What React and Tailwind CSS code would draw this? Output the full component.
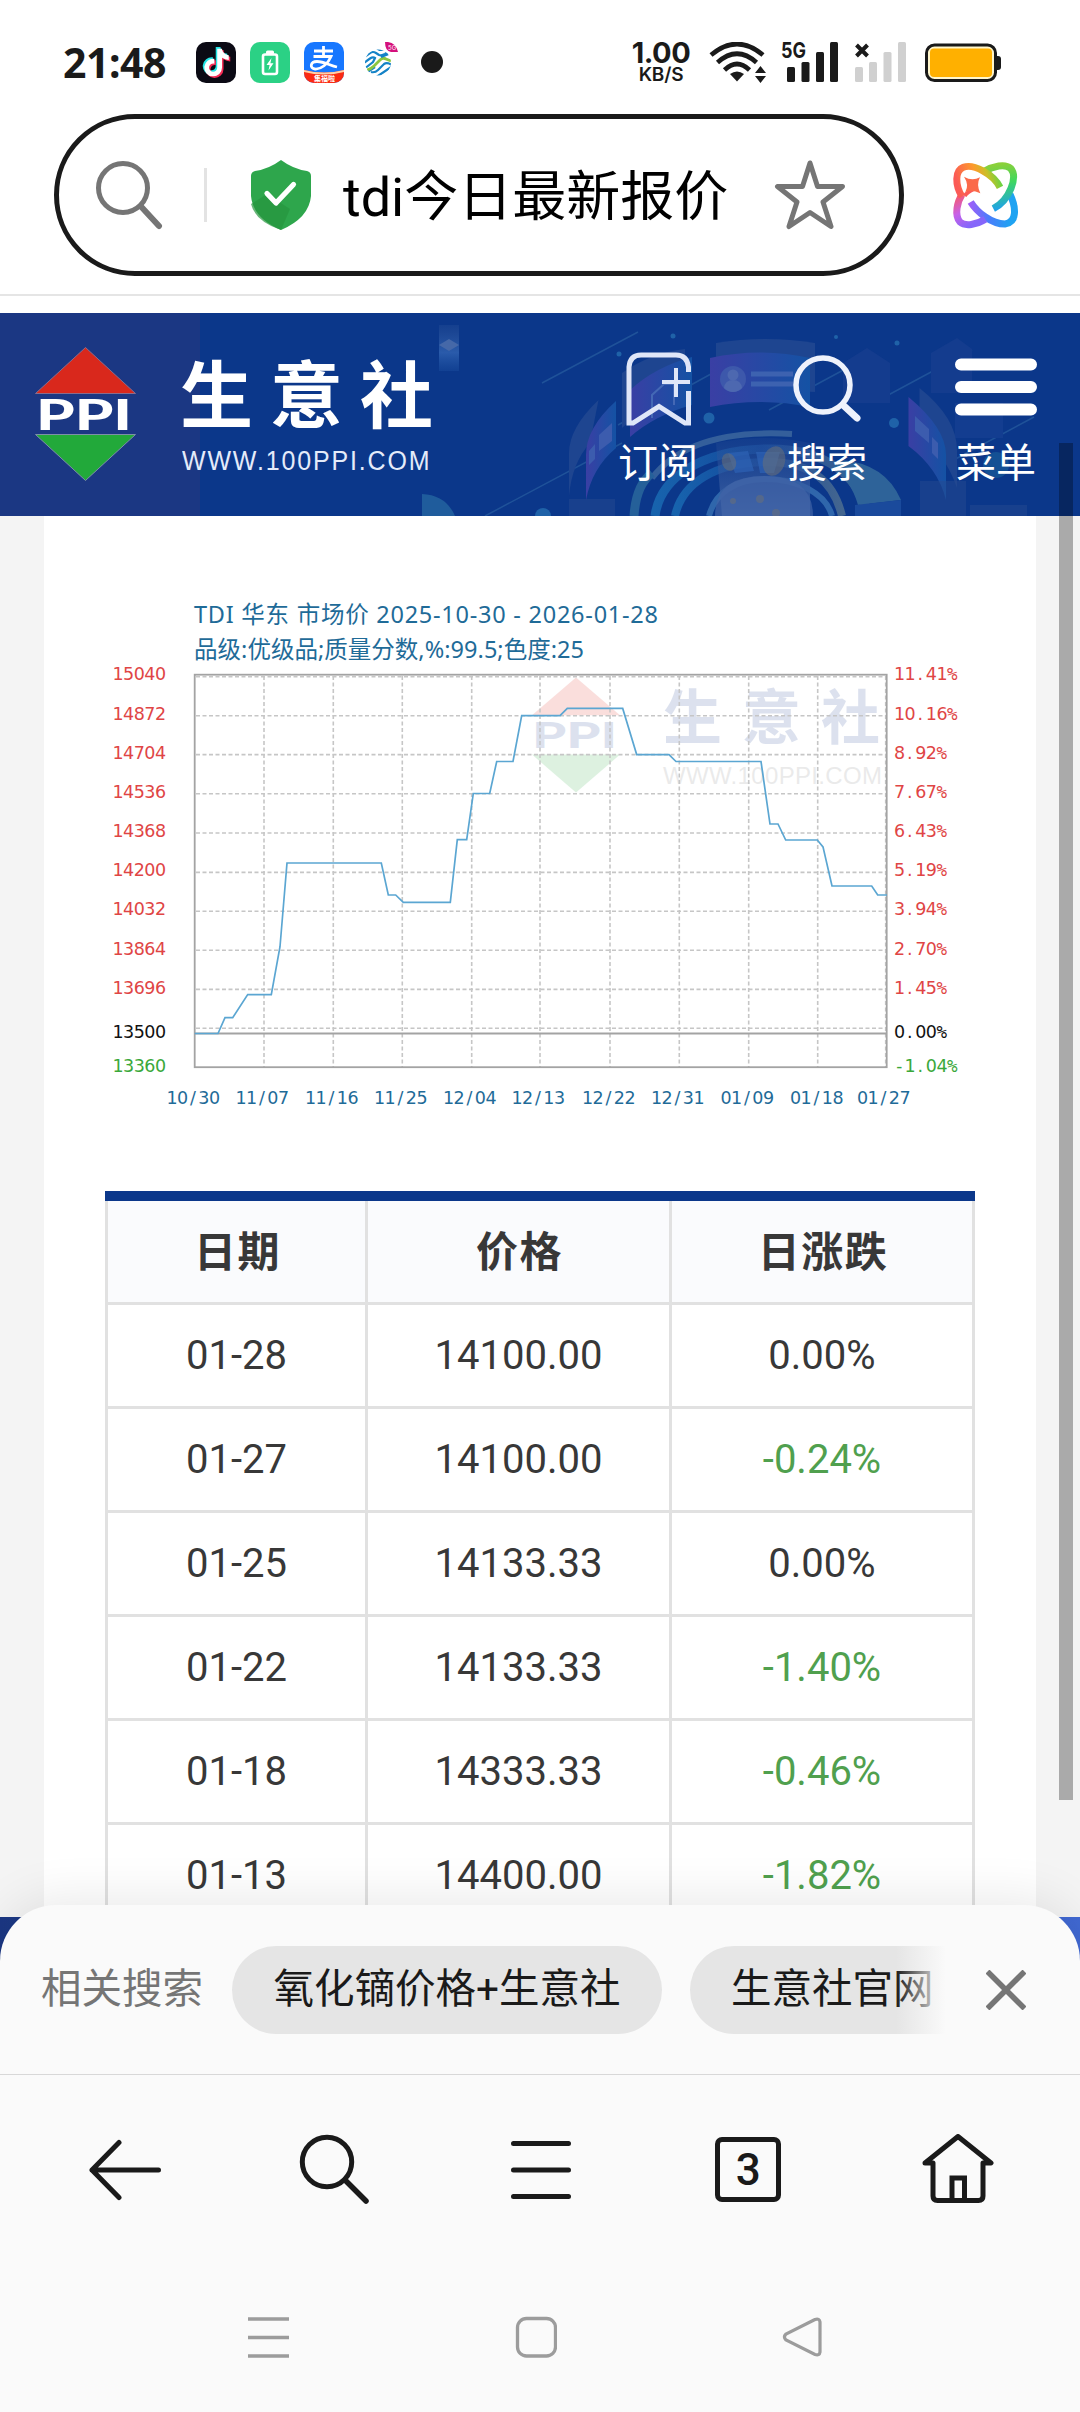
import React from 'react';
import { FaTiktok } from 'react-icons/fa';

const rows = [
  { date: '01-28', price: '14100.00', change: '0.00%' },
  { date: '01-27', price: '14100.00', change: '-0.24%' },
  { date: '01-25', price: '14133.33', change: '0.00%' },
  { date: '01-22', price: '14133.33', change: '-1.40%' },
  { date: '01-18', price: '14333.33', change: '-0.46%' },
  { date: '01-13', price: '14400.00', change: '-1.82%' },
];

// [price, percent, text baseline]
const yLabels = [
  ['15040', '11.41%', 100],
  ['14872', '10.16%', 139.5],
  ['14704', '8.92%', 178.5],
  ['14536', '7.67%', 217.5],
  ['14368', '6.43%', 256.5],
  ['14200', '5.19%', 296],
  ['14032', '3.94%', 335],
  ['13864', '2.70%', 374.5],
  ['13696', '1.45%', 413.5],
  ['13500', '0.00%', 457.5],
  ['13360', '-1.04%', 491.5],
];

const xLabels = [
  ['10/30', 76.5],
  ['11/07', 145.5],
  ['11/16', 215],
  ['11/25', 284],
  ['12/04', 353],
  ['12/13', 421.5],
  ['12/22', 492],
  ['12/31', 561],
  ['01/09', 630.5],
  ['01/18', 700],
  ['01/27', 767],
];

const gridX = [174, 243.3, 312.3, 381.7, 450, 520, 589.3, 658.7, 727.7, 795.7];
const gridY = [96.8, 135.7, 174.6, 213.8, 253, 292.4, 331.3, 370.2, 409.4, 448.3];

const pricePoints =
  '104.7,453.5 128,453.5 135,437.7 142.7,437.7 157.7,414.6 181.3,414.6 190,366.7 197,283 291.3,283 298.3,315 305.7,315 313.3,322.3 360.3,322.3 367.3,259.6 376.7,259.6 383.3,213.5 399.7,213.5 406.7,181.5 423,181.5 431.7,135.7 470,135.7 477.3,128.4 532.7,128.4 546.7,174.6 579,174.6 586,181.5 671,181.5 680,244 688,244 695.7,260 727.3,260 733,266.9 742,306 781.7,306 787.7,315 797,315';

function labelColor(i) {
  if (i === yLabels.length - 1) return '#3aa83a';
  if (i === yLabels.length - 2) return '#111111';
  return '#e04545';
}

// Every character sits in its own fixed cell, like a bitmap font
function CellText({ text, x, y, fill }) {
  return (
    <text y={y} fill={fill} fontSize="17.500" fontFamily="'DejaVu Sans'">
      {text.split('').map((ch, i) => (
        <tspan
          key={i}
          x={x + i * 10.6 + (ch === '.' || ch === '/' ? 2.4 : 0)}
          fontFamily={ch === '%' || ch === '-' ? "'DejaVu Sans Mono'" : undefined}
        >
          {ch}
        </tspan>
      ))}
    </text>
  );
}

function StatusBar() {
  return (
    <div className="flex h-[114px] shrink-0 items-start pt-[42px] pl-[63px] text-[#1a1a1a]">
      <div className="w-[133px] font-['Noto_Sans',sans-serif] text-[41px] leading-[41px] font-bold tracking-[-0.5px]">21:48</div>

      <div className="flex gap-[14px]">
        <div className="flex h-[41px] w-[40px] items-center justify-center rounded-[10px] bg-[#0b0a14]">
          <svg width="32" height="34" viewBox="0 0 32 34">
            <FaTiktok x="1" y="1" size="28" color="#25e5e6" />
            <FaTiktok x="4" y="4" size="28" color="#f52b55" />
            <FaTiktok x="2.5" y="2.5" size="28" color="#ffffff" />
          </svg>
        </div>
        <div className="flex h-[41px] w-[40px] items-center justify-center rounded-[10px] bg-[#2bd185]">
          <svg width="18" height="26" viewBox="0 0 18 26" fill="none">
            <rect x="2" y="4.500" width="14" height="19.500" rx="2" stroke="white" strokeWidth="2.600" />
            <rect x="5" y="0.500" width="8" height="4" rx="1.500" fill="white" />
            <path d="M10.500 8 5.500 15H8.600L7.500 20.500 12.500 13.300H9.400Z" fill="white" />
          </svg>
        </div>
        <svg width="40" height="41" viewBox="0 0 40 41">
          <defs>
            <clipPath id="pay">
              <rect width="40" height="41" rx="10" />
            </clipPath>
          </defs>
          <g clipPath="url(#pay)">
            <rect width="40" height="41" fill="#1777ff" />
            <g fill="none" stroke="white">
              <path d="M10 9H29M19.500 4V14.500M9.500 14.500H27C24 22 17 27.500 11 27C5.500 26.500 6 19.500 13 19.500C20 19.500 26 23.500 33 25" strokeWidth="2.800" />
            </g>
            <path d="M0 28Q20 33 40 28V41H0Z" fill="#fb2a12" />
            <path d="M0 28Q20 33 40 28V30Q20 35 0 30Z" fill="#ffd0a8" />
            <text x="10" y="39" fontSize="7" fill="#fff" fontWeight="700" fontFamily="'Noto Sans CJK SC'">集福啦</text>
          </g>
        </svg>
        <svg width="49" height="41" viewBox="0 0 49 41" fill="none">
          <defs>
            <clipPath id="cm">
              <circle cx="20" cy="20.500" r="13" />
            </clipPath>
          </defs>
          <g clipPath="url(#cm)" strokeWidth="2.200">
            <path d="M5 16L12 11Q15 9 18 11L21 13Q24 14 27 12L34 7M5 21.500L12 16.500Q15 14.500 17 16L15 20L8 25.500" stroke="#1583c7" />
            <path d="M12 7Q16 4 20 7Q23 9 27 7M17 25L8 31M12 34Q16 37 20 34L36 23" stroke="#1583c7" />
            <path d="M9 28Q13 27 16 24L22 18Q25 15 28 17L33 19" stroke="#8cc63f" strokeWidth="2.800" />
            <path d="M13 30Q17 31 20 28L26 22Q29 20 34 23M23 15L33 11" stroke="#1583c7" />
          </g>
          <path d="M27 0H30Q38 1 40 10H33Q27 9 27 0Z" fill="#d4107c" />
          <text x="30" y="8" fontSize="6" fill="#fff" fontFamily="Inter">5G</text>
        </svg>
        <div className="mt-[9px] h-[22px] w-[22px] rounded-full bg-[#1a1a1a]" />
      </div>

      <div className="ml-[188px] flex w-[60px] flex-col items-center font-['Inter',sans-serif] font-bold">
        <div className="text-[29px] leading-[22px] tracking-[-0.500px]">1.00</div>
        <div className="mt-[2px] text-[19px] leading-[18px] font-semibold tracking-[-0.200px]">KB/S</div>
      </div>

      <svg className="ml-[18px]" width="60" height="42" viewBox="0 0 60 42" fill="none" stroke="#1a1a1a" strokeWidth="4.600">
        <path d="M2 13Q28 -9 54 13M8.500 20.500Q28 3 47.500 20.500M15.500 28Q28 16 40.500 28" />
        <path d="M21 32Q28 27 35 32L28 39.500Z" fill="#1a1a1a" stroke="none" />
        <path d="M46 31 51.500 24 57 31ZM46 34 51.500 41 57 34Z" fill="#1a1a1a" stroke="none" />
      </svg>

      <svg className="ml-[12px] overflow-visible" width="58" height="42" viewBox="0 0 58 42" fill="#1a1a1a">
        <text x="0" y="16" fontSize="22" fontWeight="700" fontFamily="Inter" textLength="25" lengthAdjust="spacingAndGlyphs">5G</text>
        <rect x="6" y="25" width="8" height="15" rx="1.500" />
        <rect x="20.500" y="20" width="8" height="20" rx="1.500" />
        <rect x="35" y="10" width="8" height="30" rx="1.500" />
        <rect x="49" y="0" width="8" height="40" rx="1.500" />
      </svg>

      <svg className="ml-[16px]" width="52" height="42" viewBox="0 0 52 42" fill="#d0d0d0">
        <path d="M1.500 3 12.500 14M12.500 3 1.500 14" stroke="#1a1a1a" strokeWidth="4" />
        <rect x="0" y="25" width="8" height="15" rx="1.500" />
        <rect x="14" y="20" width="8" height="20" rx="1.500" />
        <rect x="28.500" y="10" width="8" height="30" rx="1.500" />
        <rect x="43" y="0" width="8" height="40" rx="1.500" />
      </svg>

      <svg className="ml-[18px] mt-px" width="78" height="40" viewBox="0 0 78 40">
        <rect x="1.500" y="2" width="69" height="35.500" rx="8" fill="#fff6cc" stroke="#1a1a1a" strokeWidth="3" />
        <rect x="5" y="5.500" width="62" height="28.500" rx="4" fill="#ffb000" />
        <path d="M72 13H73Q76 13 76 16V24Q76 27 73 27H72Z" fill="#1a1a1a" />
      </svg>
    </div>
  );
}

function AddressBar() {
  return (
    <div className="flex h-[182px] shrink-0 items-start border-b-2 border-[#e5e5e5] pl-[54px]">
      <div className="flex h-[162px] w-[850px] items-center rounded-full border-[5px] border-[#1a1a1a] pl-[36px]">
        <svg width="68" height="72" viewBox="0 0 68 72" fill="none" stroke="#757575" strokeWidth="5" strokeLinecap="round">
          <circle cx="28" cy="29" r="24.500" />
          <path d="M46 47.500 64 67" strokeWidth="6" />
        </svg>
        <div className="ml-[41px] h-[54px] w-[3px] bg-[#e3e3e3]" />
        <svg className="ml-[43px]" width="62" height="72" viewBox="0 0 62 72">
          <path d="M31 1Q43 10 57 12Q61 13 61 17V37Q59 59 31 71Q3 59 1 37V17Q1 13 5 12Q19 10 31 1Z" fill="#2ea64c" />
          <path d="M17 35 1 45Q5 62 31 71L40 50Z" fill="#27953f" opacity="0.700" />
          <path d="M17 34.500 26 44 43.500 25.500" fill="none" stroke="#fff" strokeWidth="5.200" strokeLinecap="round" strokeLinejoin="round" />
        </svg>
        <div className="mt-[6px] ml-[31px] w-[431px] font-['Roboto','Noto_Sans_CJK_SC',sans-serif] text-[54px] leading-[60px] whitespace-nowrap text-black">
          tdi今日最新报价
        </div>
        <svg width="72" height="70" viewBox="0 0 72 70" fill="none" stroke="#757575" strokeWidth="5" strokeLinejoin="round">
          <path d="M36 3 43.500 26.500H68.500L49 42 57 66.500 36 52.500 15 66.500 23 42 3.500 26.500H28.500Z" />
        </svg>
      </div>

      <svg className="ml-[36px] mt-[36px]" width="90" height="90" viewBox="0 0 270 270" fill="none" strokeWidth="21" strokeLinecap="butt">
        <defs>
          <linearGradient id="a1" gradientUnits="userSpaceOnUse" x1="60" y1="130" x2="190" y2="90">
            <stop offset="0" stopColor="#fb5a56" />
            <stop offset="0.450" stopColor="#fd9a2c" />
            <stop offset="0.700" stopColor="#c9c026" />
            <stop offset="1" stopColor="#52d84a" />
          </linearGradient>
          <linearGradient id="a2" gradientUnits="userSpaceOnUse" x1="85" y1="160" x2="215" y2="170">
            <stop offset="0" stopColor="#a45cf8" />
            <stop offset="0.500" stopColor="#4a7dfb" />
            <stop offset="1" stopColor="#1fa3f2" />
          </linearGradient>
          <linearGradient id="b1" gradientUnits="userSpaceOnUse" x1="160" y1="45" x2="180" y2="185">
            <stop offset="0" stopColor="#8bd03a" />
            <stop offset="0.400" stopColor="#3fd75f" />
            <stop offset="1" stopColor="#1c9df5" />
          </linearGradient>
          <linearGradient id="b2" gradientUnits="userSpaceOnUse" x1="60" y1="130" x2="110" y2="215">
            <stop offset="0" stopColor="#f7586a" />
            <stop offset="0.500" stopColor="#c861e8" />
            <stop offset="1" stopColor="#8566fa" />
          </linearGradient>
        </defs>
        <path d="M92 156C112 188 155 222 195 222C230 218 230 175 210 133" stroke="url(#a2)" />
        <path d="M136 208C110 224 75 230 60 216C42 195 52 155 66 134" stroke="url(#b2)" />
        <path d="M133 64C160 48 195 40 212 55C234 80 210 150 160 176" stroke="url(#b1)" />
        <path d="M180 112C160 72 100 40 70 52C44 62 45 105 66 140" stroke="url(#a1)" />
        <path d="M74 138Q80 128 100 118" stroke="#fb5a56" strokeWidth="12" />
        <path d="M72 80Q96 94 120 82Q108 104 121 130Q96 117 76 126Q88 104 72 80Z" fill="#fb6a4a" />
      </svg>
    </div>
  );
}

function BannerArt() {
  return (
    <svg className="absolute inset-0" width="1080" height="203" viewBox="0 0 1080 203" fill="none">
      <defs>
        <linearGradient id="screen" x1="0" x2="1">
          <stop offset="0" stopColor="#3a3fa4" />
          <stop offset="1" stopColor="#1452a4" />
        </linearGradient>
        <linearGradient id="ring" x1="0" x2="1">
          <stop offset="0" stopColor="#1763ad" />
          <stop offset="0.500" stopColor="#14489b" />
          <stop offset="1" stopColor="#44668f" />
        </linearGradient>
        <linearGradient id="cube" x1="0" y1="0" x2="0" y2="1">
          <stop offset="0" stopColor="#2c5399" stopOpacity="0.300" />
          <stop offset="0.600" stopColor="#2a5bab" />
          <stop offset="1" stopColor="#1c4fa0" stopOpacity="0.400" />
        </linearGradient>
        <linearGradient id="beam" x1="0" y1="0" x2="0" y2="1">
          <stop offset="0" stopColor="#2f5298" stopOpacity="0.200" />
          <stop offset="1" stopColor="#3d62a5" />
        </linearGradient>
      </defs>

      <rect x="439" y="12" width="20" height="46" fill="url(#cube)" />
      <path d="M439 32 449 26 459 32 449 38Z" fill="#4568a8" />
      <path d="M422 203V181Q446 182 455 203Z" fill="#1f5c9c" />

      <g stroke="#1f5299" strokeWidth="1.500">
        <path d="M485 203 622 130M542 70 638 19M769 97 862 47M879 87 972 37M948 150 1034 104M618 112 720 56" />
      </g>

      <path d="M843 50 867 35 890 50V90H843ZM931 40 957 25 972 36V80H931Z" fill="#143c8e" />
      <path d="M955 90H1003V125H955Z" fill="#133d90" />

      <path d="M716 30Q766 22 815 30V79L716 74Z" fill="#1e4590" />
      <path d="M710 45Q760 34 810 45V94Q760 84 710 94Z" fill="url(#screen)" />
      <circle cx="733" cy="66" r="13" fill="#3d58ab" />
      <circle cx="733" cy="62" r="5.500" fill="#4d68b0" />
      <path d="M724 75Q725 67 733 67T742 75Q738 79 733 79T724 75Z" fill="#4d68b0" />
      <path d="M751 61H793M751 71H793" stroke="#3d62b0" strokeWidth="5" />

      <path d="M622 60Q650 40 685 36V82Q650 88 622 115Z" fill="#1e4590" />
      <path d="M630 77Q655 54 692 44V92Q655 102 630 124Z" fill="url(#screen)" />
      <path d="M652 105V82L664 71H674V92" stroke="#4468b5" strokeWidth="2" />
      <path d="M598.500 87Q569 115 569 140V183Q572 150 590 130Z" fill="#1e4590" />
      <path d="M616 88Q586 115 586 142V187Q592 155 616 135Z" fill="url(#screen)" />
      <path d="M599 122 612 110V128L599 138ZM589 138 595 131V146L589 152Z" fill="#3c5cae" />
      <path d="M919.500 75Q957 105 957 137V175Q945 140 919.500 125Z" fill="#1e4590" />
      <path d="M908.500 84Q946 115 946 142V187Q938 155 908.500 133Z" fill="url(#screen)" />
      <path d="M915 103 929 116V130L915 118ZM932 124 938 130V146L932 140Z" fill="#3c5cae" />

      <path d="M792 121Q690 115 652 165" stroke="#345f9b" strokeWidth="6" />
      <path d="M634 203Q636 172 652 160" stroke="#256099" strokeWidth="9" />
      <path d="M655 203C660 165 700 138 764 136S860 165 868 203" stroke="url(#ring)" strokeWidth="9" />
      <path d="M675 203C682 170 715 150 764 149S834 170 842 203" stroke="url(#ring)" strokeWidth="8" />
      <path d="M709 203C715 180 735 166 766 166S826 180 832 203" stroke="#2f66ab" strokeWidth="6" />
      <path d="M840 147Q885 150 901 187L858 192Q850 165 832 155Z" fill="#2e6399" />
      <path d="M855 192 901 187V203H855Z" fill="#1a4a9c" />
      <path d="M716 130Q764 120 810 130V203H722Z" fill="url(#beam)" />
      <path d="M715 203Q715 163 764 163T813 203Z" fill="#4164a6" opacity="0.700" />
      <path d="M728 140 748 138 754 158 735 160ZM756 139H780L774 160H760Z" fill="#2e62b5" opacity="0.700" />
      <g fill="#6a7078" opacity="0.550">
        <ellipse cx="774" cy="148" rx="11" ry="15" transform="rotate(15 774 148)" />
        <ellipse cx="729" cy="149" rx="7" ry="9" transform="rotate(-20 729 149)" />
        <circle cx="760" cy="186" r="4" />
        <circle cx="776" cy="200" r="4" />
        <circle cx="733" cy="188" r="3" />
      </g>

      <path d="M569 186H615V203H569ZM920 168H966V203H920ZM970 192H1027V203H970Z" fill="#26498f" opacity="0.500" />
      <g fill="#1f62a8">
        <circle cx="709" cy="105" r="5.500" />
        <circle cx="894" cy="110" r="5" />
        <circle cx="673" cy="23" r="2.500" />
        <circle cx="619" cy="41" r="2.500" />
        <circle cx="897" cy="30" r="2.500" />
        <circle cx="836" cy="24" r="2" />
        <circle cx="996" cy="152" r="13" fill="#145094" />
        <circle cx="543" cy="203" r="8" />
      </g>
    </svg>
  );
}

function Banner() {
  return (
    <div className="relative h-[203px] shrink-0 overflow-hidden bg-[#0b378a]">
      <div className="absolute inset-y-0 left-0 w-[200px] bg-[#1b3783]" />
      <BannerArt />
      <div className="relative flex h-full items-start pl-[34px] text-white">
        <svg className="mt-[33px]" width="103" height="136" viewBox="0 0 103 136">
          <path d="M51.500 1.500 101.500 47.500H1.500Z" fill="#d9281c" stroke="#8a6c8c" strokeWidth="1" />
          <text x="2" y="84" fontSize="42" fontWeight="900" fill="white" fontFamily="Lato" textLength="96" lengthAdjust="spacingAndGlyphs">PPI</text>
          <path d="M51.500 134.500 101.500 88.500H1.500Z" fill="#22a93a" stroke="#7d8fa8" strokeWidth="1" />
        </svg>
        <div className="ml-[43px] w-[435px] whitespace-nowrap">
          <div className="mt-[33px] font-['Noto_Sans_CJK_SC',sans-serif] text-[73px] leading-[88px] font-bold tracking-[17px]">生意社</div>
          <div className="mt-[10px] ml-[2px] origin-left scale-x-[0.925] font-['Liberation_Sans',sans-serif] text-[27px] leading-[34px] tracking-[2px] text-[#e4ebfa]">WWW.100PPI.COM</div>
        </div>

        <div className="flex gap-[83px] pt-[38px] font-['Roboto','Noto_Sans_CJK_SC',sans-serif] text-[40px] leading-[50px] whitespace-nowrap">
          <div className="flex w-[86px] flex-col items-center">
            <svg width="68" height="78" viewBox="0 0 68 78" fill="none" stroke="#dfe6f8" strokeWidth="5">
              <path d="M64.500 21V16Q63 4 52 4H17Q6 4 5 16V72H9L35 55.500 61 72H64.500V40" />
              <path d="M52 17V46M38 31H66" strokeWidth="4" />
            </svg>
            <div className="mt-[10px]">订阅</div>
          </div>
          <div className="flex w-[86px] flex-col items-center">
            <svg width="70" height="78" viewBox="0 0 70 78" fill="none" stroke="#eef2fc" strokeWidth="5.500" strokeLinecap="round">
              <circle cx="31" cy="34" r="27" />
              <path d="M51 54 65 67" strokeWidth="7" />
            </svg>
            <div className="mt-[10px]">搜索</div>
          </div>
          <div className="flex w-[86px] flex-col items-center">
            <svg width="82" height="78" viewBox="0 0 82 78" stroke="white" strokeWidth="12" strokeLinecap="round">
              <path d="M6 13.500H76M6 36H76M6 58.500H76" />
            </svg>
            <div className="mt-[10px]">菜单</div>
          </div>
        </div>
      </div>
    </div>
  );
}

function PriceChart() {
  return (
    <svg className="mt-[64px] ml-[46px] block shrink-0" width="900" height="540" viewBox="0 0 900 540" fill="none">
      <g opacity="0.150">
        <path d="M486 97.500 530 135.300H442Z" fill="#e02a1e" />
        <path d="M486 212.500 530 174.600H442Z" fill="#22a93a" />
        <g fill="#1b3f93">
          <text x="442" y="168" fontSize="36" fontWeight="900" fontFamily="Lato" textLength="85" lengthAdjust="spacingAndGlyphs">PPI</text>
          <text x="573 652 731" y="159" fontSize="59" fontWeight="700" fontFamily="'Noto Sans CJK SC'">生意社</text>
        </g>
        <text x="573" y="204" fontSize="24" fill="#777" fontFamily="'Liberation Sans'" textLength="219">WWW.100PPI.COM</text>
      </g>

      <g fill="#1f6b98" fontSize="23.500" fontFamily="'Noto Sans', 'Noto Sans CJK SC'">
        <text x="104" y="42.500" textLength="464">TDI 华东 市场价 2025-10-30 - 2026-01-28</text>
        <text x="104" y="78" textLength="390">品级:优级品;质量分数,%:99.5;色度:25</text>
      </g>

      <g stroke="#c6c6c6" strokeWidth="1.600" strokeDasharray="4 2.500">
        {gridX.map((x) => (
          <path key={x} d={`M${x} 96V487`} />
        ))}
        {gridY.map((y) => (
          <path key={y} d={`M106 ${y}H796`} />
        ))}
      </g>
      <rect x="104.700" y="94.700" width="692" height="392.500" stroke="#a3a3a3" strokeWidth="1.800" />
      <path d="M105 453.500H797" stroke="#a3a3a3" strokeWidth="1.800" />
      <polyline points={pricePoints} stroke="#5ba6d2" strokeWidth="1.700" />

      {yLabels.map(([price, pct, y], i) => (
        <g key={price}>
          <CellText text={price} x={22.5} y={y} fill={labelColor(i)} />
          <CellText text={pct} x={804} y={y} fill={labelColor(i)} />
        </g>
      ))}
      {xLabels.map(([label, x]) => (
        <CellText key={label} text={label} x={x} y={523.5} fill="#1f6b98" />
      ))}
    </svg>
  );
}

function PriceTable() {
  return (
    <div className="mx-[61px] mt-[71px] border-t-[10px] border-[#0b378a] font-['Roboto','Noto_Sans_CJK_SC',sans-serif] text-[#383838]">
      <div className="grid h-[104px] grid-cols-[263px_304px_303px] border-b-[3px] border-[#e1e1e1] bg-[#fafbfd] text-center text-[42px] leading-[103px] font-bold tracking-[1.500px]">
        <div className="border-x-[3px] border-[#e1e1e1] pl-[2px]">日期</div>
        <div className="border-r-[3px] border-[#e1e1e1] pl-[2px]">价格</div>
        <div className="border-r-[3px] border-[#e1e1e1] pl-[2px]">日涨跌</div>
      </div>
      {rows.map((row) => (
        <div key={row.date} className="grid h-[104px] grid-cols-[263px_304px_303px] border-b-[3px] border-[#e1e1e1] text-center text-[40px] leading-[102px]">
          <div className="border-x-[3px] border-[#e1e1e1]">{row.date}</div>
          <div className="border-r-[3px] border-[#e1e1e1]">{row.price}</div>
          <div className={row.change.startsWith('-') ? 'border-r-[3px] border-[#e1e1e1] text-[#50a04e]' : 'border-r-[3px] border-[#e1e1e1]'}>
            {row.change}
          </div>
        </div>
      ))}
    </div>
  );
}

function RelatedSearches() {
  return (
    <div className="relative z-10 -mt-[80px] flex h-[169px] shrink-0 items-center rounded-t-[56px] bg-[#fafafa] pl-[41px] font-['Roboto','Noto_Sans_CJK_SC',sans-serif] text-[40.500px] whitespace-nowrap text-[#1a1a1a] shadow-[0_-6px_50px_rgba(0,0,0,0.09)]">
      <div className="w-[191px] text-[#757575]">相关搜索</div>
      <div className="flex w-[714px] gap-[28px] overflow-hidden">
        <div className="flex h-[88px] w-[430px] shrink-0 items-center justify-center rounded-full bg-[#e5e5e5]">氧化镝价格+生意社</div>
        <div className="relative flex h-[88px] w-[256px] shrink-0 items-center rounded-l-full bg-[#e5e5e5] pl-[41px]">
          生意社官网
          <div className="absolute inset-y-0 right-0 w-[50px] bg-linear-to-r from-[#fafafa]/0 to-[#fafafa]" />
        </div>
      </div>
      <svg className="ml-[40px]" width="40" height="40" viewBox="0 0 40 40" stroke="#757575" strokeWidth="5.500">
        <path d="M1.500 1.500 38.500 38.500M38.500 1.500 1.500 38.500" />
      </svg>
    </div>
  );
}

function Toolbar() {
  return (
    <div className="relative z-10 flex h-[190px] shrink-0 items-center justify-between border-t border-[#d8d8d8] bg-[#fafafa] pl-[89px] pr-[86px] text-[#1a1a1a]">
      <svg width="72" height="72" viewBox="0 0 72 72" fill="none" stroke="currentColor" strokeWidth="5" strokeLinecap="round" strokeLinejoin="round">
        <path d="M69.500 36H3M30 8.500 3 36 30 63.500" />
      </svg>
      <svg width="72" height="72" viewBox="0 0 72 72" fill="none" stroke="currentColor" strokeWidth="5" strokeLinecap="round">
        <circle cx="30" cy="28" r="24.700" />
        <path d="M49 47 69 67" strokeWidth="5.500" />
      </svg>
      <svg width="72" height="72" viewBox="0 0 72 72" fill="none" stroke="currentColor" strokeWidth="5" strokeLinecap="round">
        <path d="M7.500 9.500H62.500M7.500 36H62.500M7.500 62.500H62.500" />
      </svg>
      <div className="flex h-[72px] w-[72px] items-center pl-[1.500px]">
        <div className="flex h-[65px] w-[66px] items-center justify-center rounded-[7px] border-[5px] border-current font-['Roboto',sans-serif] text-[44px] font-medium">3</div>
      </div>
      <svg width="72" height="72" viewBox="0 0 72 72" fill="none" stroke="currentColor" strokeWidth="5" strokeLinejoin="round">
        <path d="M36 2.500 69 29H61V62Q61 66.500 56.500 66.500H15.500Q11 66.500 11 62V29H3Z" />
        <path d="M30 66V44H42.500V66" strokeLinejoin="miter" />
      </svg>
    </div>
  );
}

function SystemNav() {
  return (
    <div className="relative z-10 flex flex-1 items-start justify-between bg-[#fafafa] pt-[52px] pl-[247px] pr-[256px]">
      <svg width="42" height="42" viewBox="0 0 42 42" stroke="#9c9c9c" strokeWidth="3.500">
        <path d="M1 3H42M1 21.500H42M1 40H42" />
      </svg>
      <svg width="42" height="42" viewBox="0 0 42 42" fill="none" stroke="#9c9c9c" strokeWidth="3.300">
        <rect x="2.500" y="2.500" width="38" height="37.500" rx="9" />
      </svg>
      <svg width="42" height="42" viewBox="0 0 42 42" fill="none" stroke="#9c9c9c" strokeWidth="3.200">
        <path d="M33 3.500 4 18Q1 21 4 24L33 38.500Q37.500 40 38 36V6Q37.500 2 33 3.500Z" />
      </svg>
    </div>
  );
}

export default function App() {
  return (
    <div className="flex h-[2412px] w-[1080px] flex-col overflow-hidden bg-white">
      <StatusBar />
      <AddressBar />
      <div className="relative mt-[17px] flex h-[1672px] shrink-0 flex-col overflow-hidden bg-[#f4f4f4]">
        <Banner />
        <div className="mx-[44px] flex h-[1401px] shrink-0 flex-col overflow-hidden bg-white">
          <PriceChart />
          <PriceTable />
        </div>
        <div className="h-[68px] shrink-0 bg-linear-to-r from-[#1b3783] to-[#4169d3]" />
        <div className="absolute right-[7px] top-[130px] h-[1357px] w-[14px] bg-black/30" />
      </div>
      <RelatedSearches />
      <Toolbar />
      <SystemNav />
    </div>
  );
}
